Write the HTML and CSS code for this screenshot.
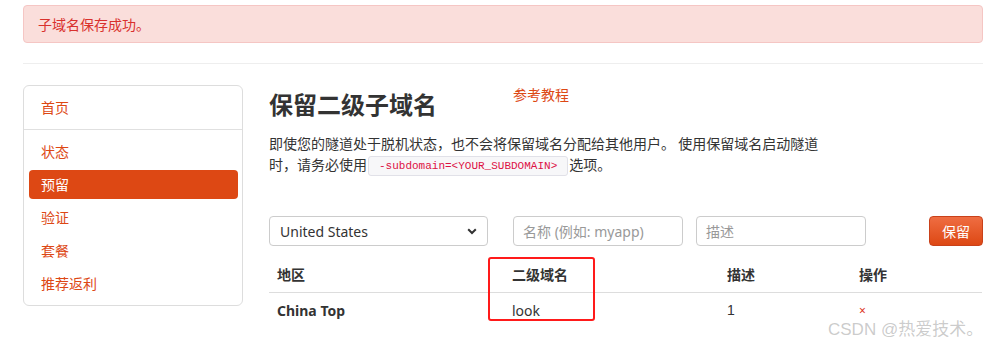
FILE: index.html
```html
<!DOCTYPE html>
<html lang="zh">
<head>
<meta charset="utf-8">
<link rel="stylesheet" href="styles.css">
</head>
<body>
<div class="page">
  <div class="alert">子域名保存成功。</div>
  <hr class="rule">
  <div class="layout">
    <nav class="sidebar">
      <ul class="nav">
        <li class="nav-item"><a>首页</a></li>
        <li class="nav-divider"></li>
        <li class="nav-item"><a>状态</a></li>
        <li class="nav-item active"><a>预留</a></li>
        <li class="nav-item"><a>验证</a></li>
        <li class="nav-item"><a>套餐</a></li>
        <li class="nav-item"><a>推荐返利</a></li>
      </ul>
    </nav>
    <main class="main">
      <div class="head-row">
        <h2 class="title">保留二级子域名</h2>
        <a class="tutorial">参考教程</a>
      </div>
      <p class="desc">即使您的隧道处于脱机状态，也不会将保留域名分配给其他用户。 使用保留域名启动隧道时，请务必使用<code class="code">-subdomain=&lt;YOUR_SUBDOMAIN&gt;</code>选项。</p>
      <form class="form-row">
        <div class="select">
          <span>United States</span>
          <svg class="caret" width="10" height="7" viewBox="0 0 10 7"><path d="M1.2 1.2 L5 5 L8.8 1.2" fill="none" stroke="#333" stroke-width="2"/></svg>
        </div>
        <div class="input name"><span class="ph">名称 (例如: myapp)</span></div>
        <div class="input descr"><span class="ph">描述</span></div>
        <button type="button" class="btn">保留</button>
      </form>
      <div class="table-wrap">
        <table class="table">
          <thead>
            <tr><th class="c1">地区</th><th class="c2">二级域名</th><th class="c3">描述</th><th class="c4">操作</th></tr>
          </thead>
          <tbody>
            <tr><td class="strong">China Top</td><td>look</td><td class="num">1</td><td><span class="del">×</span></td></tr>
          </tbody>
        </table>
        <div class="mark"></div>
      </div>
    </main>
  </div>
  <div class="watermark">CSDN @热爱技术。</div>
</div>
</body>
</html>
```

FILE: styles.css
```css
* { box-sizing: border-box; }
html, body { margin: 0; padding: 0; background: #fff; }
body {
  font-family: "Noto Sans", "Noto Sans CJK SC", sans-serif;
  font-size: 14px;
  line-height: 21px;
  color: #333;
}
.page {
  position: relative;
  width: 1003px;
  height: 350px;
  padding: 5px 20px 0 23px;
  overflow: hidden;
}
.alert {
  width: 960px;
  height: 38px;
  background: #fadedb;
  border: 1px solid #f5c6c4;
  border-radius: 4px;
  color: #d9312d;
  padding: 7px 14px;
  font-family: "Noto Sans CJK SC", sans-serif;
  line-height: 22px;
}
.rule {
  width: 960px;
  margin: 20px 0 21px;
  border: 0;
  border-top: 1px solid #eeeeee;
  height: 0;
}
.layout {
  display: flex;
  gap: 26px;
  align-items: flex-start;
}
.sidebar {
  width: 220px;
  border: 1px solid #dddddd;
  border-radius: 6px;
  padding: 7px 4px 7px 5px;
}
.nav {
  list-style: none;
  margin: 0;
  padding: 0;
  display: flex;
  flex-direction: column;
  gap: 4px;
}
.nav-item a {
  display: block;
  height: 29px;
  line-height: 29px;
  padding: 0 12px;
  color: #dd4814;
  font-family: "Noto Sans CJK SC", sans-serif;
  border-radius: 4px;
}
.nav-item.active a {
  background: #dd4814;
  color: #fff;
}
.nav-divider {
  height: 1px;
  background: #e0e0e0;
  margin: 3px -4px 3px -5px;
}
.main {
  width: 714px;
}
.head-row {
  display: flex;
  align-items: flex-start;
}
.title {
  margin: 2px 0 0;
  width: 244px;
  font-size: 24px;
  line-height: 34px;
  font-weight: bold;
  color: #333;
  font-family: "Noto Sans CJK SC", sans-serif;
}
.tutorial {
  color: #dd4814;
  font-family: "Noto Sans CJK SC", sans-serif;
  line-height: 20px;
  margin-top: -1px;
}
.desc {
  margin: 12px 0 0;
  width: 560px;
  font-family: "Noto Sans CJK SC", sans-serif;
  line-height: 21px;
}
.code {
  display: inline-block;
  font-family: "Liberation Mono", monospace;
  font-size: 11px;
  line-height: 16px;
  color: #dd1144;
  background: #f7f7f9;
  border: 1px solid #e1e1e8;
  border-radius: 3px;
  padding: 1px 10px;
  margin: 0 1px;
  vertical-align: 1px;
}
.form-row {
  display: flex;
  align-items: center;
  margin: 40px 0 0;
  height: 30px;
}
.select, .input {
  height: 30px;
  border: 1px solid #cccccc;
  border-radius: 4px;
  display: flex;
  align-items: center;
  background: #fff;
}
.select {
  width: 219px;
  padding: 0 10px;
  justify-content: space-between;
  color: #333;
}
.input { padding: 0 9px; }
.input.name { width: 170px; margin-left: 25px; }
.input.descr { width: 170px; margin-left: 13px; }
.ph { color: #999; font-family: "Noto Sans", "Noto Sans CJK SC", sans-serif; }
.btn {
  margin-left: auto;
  width: 54px;
  height: 30px;
  border: 1px solid #c9411a;
  border-radius: 4px;
  background: linear-gradient(#ef6d42, #dd4814);
  color: #fff;
  font-size: 14px;
  font-family: "Noto Sans CJK SC", sans-serif;
  padding: 0;
}
.table-wrap {
  position: relative;
  margin-top: 10px;
}
.table {
  width: 713px;
  border-collapse: collapse;
}
.table th, .table td {
  text-align: left;
  padding: 8px 8px;
  line-height: 21px;
}
.table th {
  font-weight: bold;
  padding-bottom: 7px;
  border-bottom: 1px solid #dddddd;
  font-family: "Noto Sans CJK SC", sans-serif;
}
.table td { padding-top: 6px; }
.c1 { width: 235px; }
.c2 { width: 215px; }
.c3 { width: 132px; }
.strong { font-weight: bold; }
.num { font-family: "Liberation Sans", sans-serif; }
.del { color: #dd3322; font-size: 12px; }
.mark {
  position: absolute;
  left: 219px;
  top: 1px;
  width: 107px;
  height: 64px;
  border: 2px solid #ff1a1a;
  border-radius: 3px;
}
.watermark {
  position: absolute;
  left: 828px;
  top: 319px;
  font-family: "Liberation Sans", "Noto Sans CJK SC", sans-serif;
  font-size: 17px;
  line-height: 22px;
  color: rgba(160, 160, 160, 0.55);
  white-space: nowrap;
}
```
